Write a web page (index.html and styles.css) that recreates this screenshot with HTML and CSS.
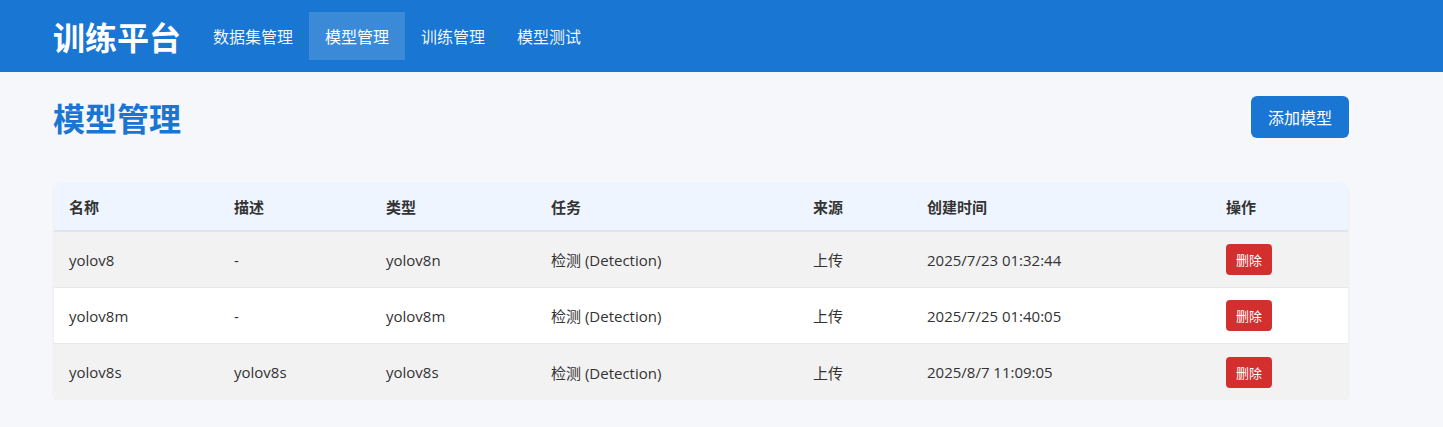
FILE: index.html
```html
<!DOCTYPE html>
<html lang="zh-CN">
<head>
<meta charset="utf-8">
<title>训练平台</title>
<link rel="stylesheet" href="styles.css">
</head>
<body>
<header class="topbar">
  <div class="brand">训练平台</div>
  <nav class="nav">
    <a class="nav-item">数据集管理</a>
    <a class="nav-item active">模型管理</a>
    <a class="nav-item">训练管理</a>
    <a class="nav-item">模型测试</a>
  </nav>
</header>
<main class="content">
  <div class="page-head">
    <h1 class="page-title">模型管理</h1>
    <button class="btn-primary">添加模型</button>
  </div>
  <div class="table-card">
    <table class="models">
      <colgroup>
        <col class="c1"><col class="c2"><col class="c3"><col class="c4"><col class="c5"><col class="c6"><col class="c7">
      </colgroup>
      <thead>
        <tr><th>名称</th><th>描述</th><th>类型</th><th>任务</th><th>来源</th><th>创建时间</th><th>操作</th></tr>
      </thead>
      <tbody>
        <tr><td>yolov8</td><td>-</td><td>yolov8n</td><td>检测 (Detection)</td><td>上传</td><td>2025/7/23 01:32:44</td><td><button class="btn-del">删除</button></td></tr>
        <tr><td>yolov8m</td><td>-</td><td>yolov8m</td><td>检测 (Detection)</td><td>上传</td><td>2025/7/25 01:40:05</td><td><button class="btn-del">删除</button></td></tr>
        <tr><td>yolov8s</td><td>yolov8s</td><td>yolov8s</td><td>检测 (Detection)</td><td>上传</td><td>2025/8/7 11:09:05</td><td><button class="btn-del">删除</button></td></tr>
      </tbody>
    </table>
  </div>
</main>
</body>
</html>
```
FILE: styles.css
```css
* { box-sizing: border-box; }
html, body { margin: 0; padding: 0; }
body {
  background: #f5f7fb;
  font-family: "Open Sans", "Noto Sans", "Noto Sans CJK SC", sans-serif;
  color: #333;
}
.topbar {
  height: 72px;
  background: #1976d2;
  display: flex;
  align-items: center;
  padding-left: 53px;
}
.brand {
  font-family: "Noto Sans CJK SC", sans-serif;
  font-weight: 700;
  font-size: 32px;
  line-height: 40px;
  color: #fff;
  margin-right: 16px;
}
.nav { display: flex; align-items: center; }
.nav-item {
  font-family: "Noto Sans CJK SC", sans-serif;
  font-size: 16px;
  color: rgba(255, 255, 255, 0.95);
  height: 48px;
  line-height: 48px;
  padding: 0 16px;
}
.nav-item.active { background: rgba(255, 255, 255, 0.15); color: #fff; }
.content {
  padding: 0 53px;
}
.page-head {
  width: 1296px;
  display: flex;
  justify-content: space-between;
  align-items: flex-start;
  padding-top: 24px;
  height: 111px;
}
.page-title {
  margin: 0;
  font-family: "Noto Sans CJK SC", sans-serif;
  font-size: 32px;
  line-height: 42px;
  font-weight: 700;
  color: #1976d2;
}
.btn-primary {
  border: none;
  background: #1976d2;
  color: #fff;
  font-family: "Noto Sans CJK SC", sans-serif;
  font-size: 16px;
  height: 42px;
  width: 98px;
  border-radius: 6px;
  padding: 0;
}
.table-card {
  margin-left: 1px;
  width: 1294px;
  background: #fff;
  border-radius: 6px;
  overflow: hidden;
  box-shadow: 0 1px 3px rgba(0, 0, 0, 0.08);
}
.models {
  width: 100%;
  border-collapse: collapse;
  table-layout: fixed;
  font-size: 15px;
}
.c1 { width: 165px; } .c2 { width: 152px; } .c3 { width: 165px; }
.c4 { width: 262px; } .c5 { width: 114px; } .c6 { width: 299px; } .c7 { width: auto; }
.models th {
  box-sizing: content-box;
  background: #eff5fe;
  text-align: left;
  font-weight: 700;
  height: 47px;
  padding: 0 15px;
  border-bottom: 2px solid #dfe6ee;
  color: #333;
}
.models td {
  box-sizing: content-box;
  height: 55px;
  padding: 0 15px;
  border-bottom: 1px solid #e9e9e9;
  color: #333;
}
.models tbody tr:nth-child(odd) td { background: #f2f2f2; }
.models tbody tr:last-child td { border-bottom: none; height: 56px; }
.btn-del {
  border: none;
  background: #d32f2f;
  color: #fff;
  font-family: "Noto Sans CJK SC", sans-serif;
  font-size: 13px;
  width: 46px;
  height: 31px;
  border-radius: 4px;
  padding: 0;
  vertical-align: middle;
}
```
